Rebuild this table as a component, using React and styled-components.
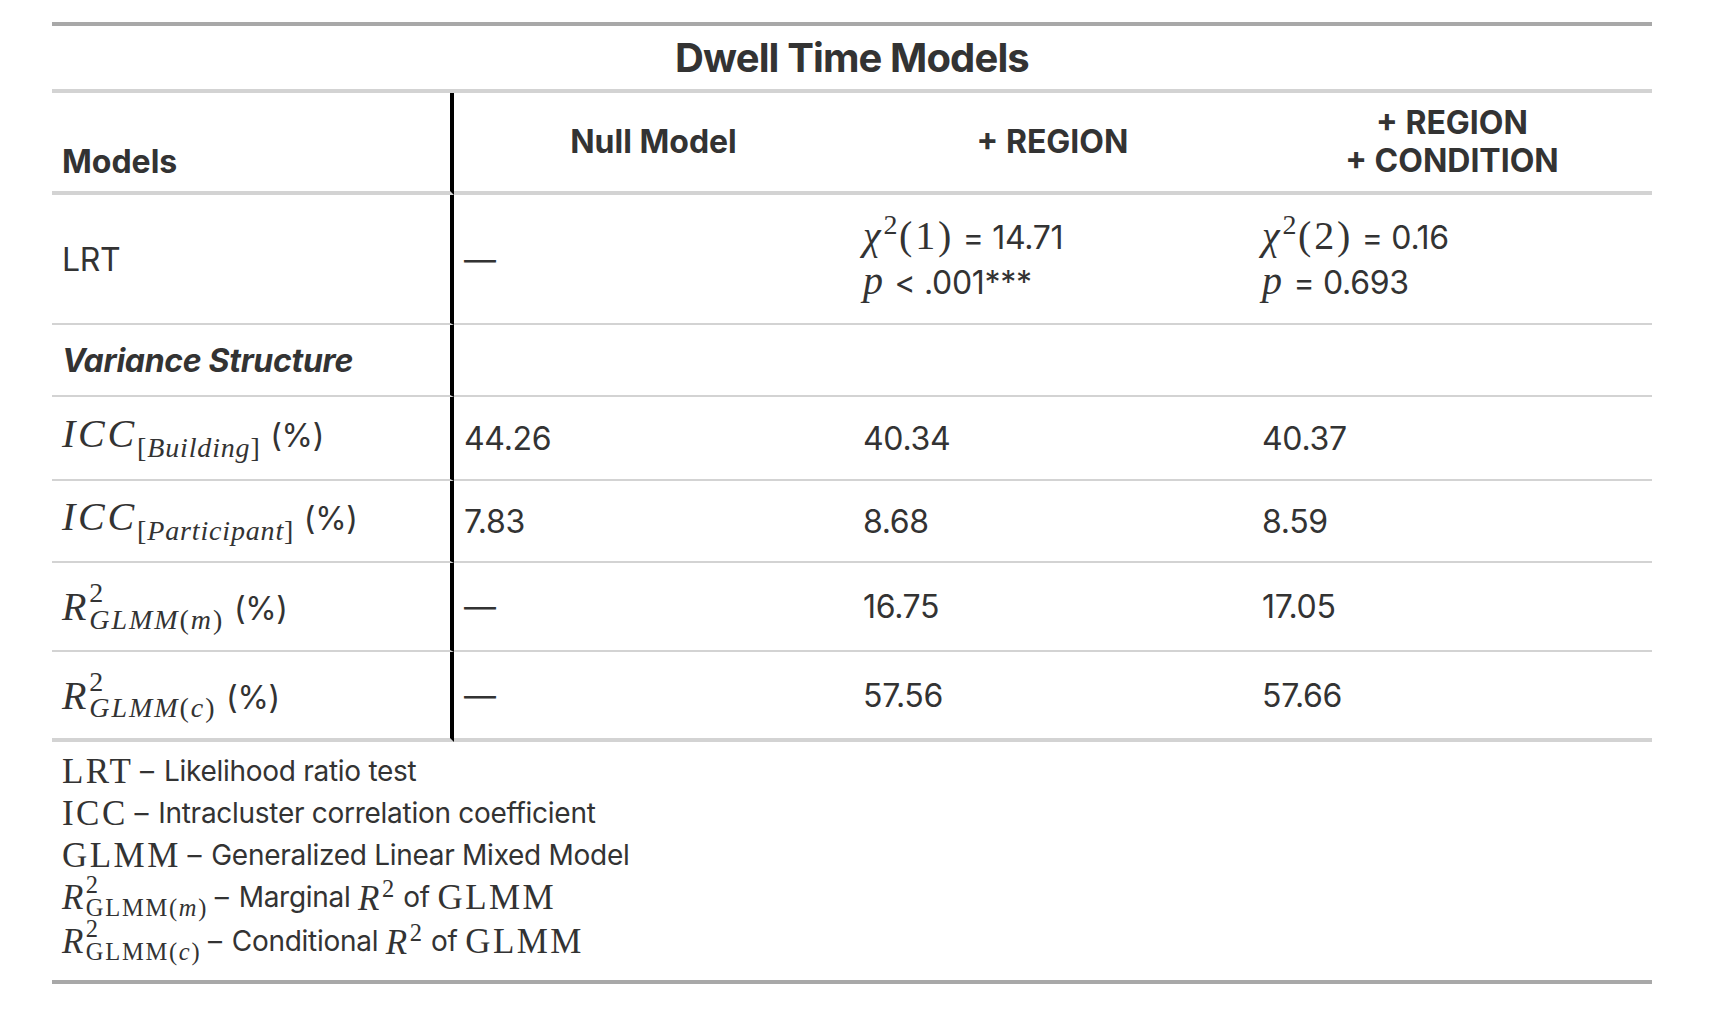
import React from 'react';
import styled, {createGlobalStyle} from 'styled-components';

const GlobalStyle = createGlobalStyle`
  html, body {
    margin: 0;
    background: #fff;
  }
  body {
    font-family: Inter, "Noto Sans", sans-serif;
    color: #333;
  }
`;

const Page = styled.div`
  padding: 22px 0 30px 52px;
`;

const Frame = styled.div`
  width: 1600px;
  border-top: 4px solid #a8a8a8;
  border-bottom: 4px solid #a8a8a8;
  font-size: 32px;
  color: #333;
`;

const Title = styled.div`
  box-sizing: border-box;
  height: 67px;
  display: flex;
  align-items: center;
  justify-content: center;
  font-size: 40px;
  font-weight: 700;
  letter-spacing: -0.022em;
  border-bottom: 4px solid #d3d3d3;
`;

const Row = styled.div`
  display: grid;
  grid-template-columns: 402px 399px 399px 400px;
  height: ${p => p.$h}px;
`;

const Cell = styled.div`
  box-sizing: border-box;
  display: flex;
  flex-direction: column;
  justify-content: ${p => (p.$bottom ? 'flex-end' : 'center')};
  align-items: ${p => (p.$center ? 'center' : 'flex-start')};
  text-align: ${p => (p.$center ? 'center' : 'left')};
  padding: 0 10px ${p => (p.$bottom ? 10 : 0)}px;
  border-bottom: ${p => p.$bw}px solid #d3d3d3;
  border-right: ${p => (p.$divider ? '4px solid #000' : 'none')};
  white-space: nowrap;
  letter-spacing: -0.01em;
`;

const HeadText = styled.div`
  font-weight: 700;
  line-height: 38px;
  letter-spacing: 0;
`;

const GroupLabel = styled.div`
  font-weight: 700;
  font-style: italic;
`;

const Line = styled.div`
  line-height: 48px;
  height: 48px;
`;

const M = styled.span`
  font-family: "Liberation Serif", "Times New Roman", serif;
  font-size: 1.25em;
  line-height: 1;
  letter-spacing: 0.07em;
`;

const I = styled.span`
  font-style: italic;
`;

const Rm = styled.span`
  font-style: normal;
`;

const Sub = styled.span`
  font-size: 0.7em;
  letter-spacing: 0.03em;
  vertical-align: -0.34em;
`;

const Sup = styled.span`
  font-size: 0.7em;
  letter-spacing: 0;
  vertical-align: 0.55em;
  margin-right: 0.06em;
`;

const Scripts = styled.span`
  display: inline-flex;
  flex-direction: column;
  vertical-align: 0.45em;

  & > span {
    font-size: 0.7em;
    line-height: 0.93;
    letter-spacing: 0.07em;
  }
`;

const Pct = styled.span`
  margin-left: 0.3em;
`;

const Notes = styled.div`
  box-sizing: border-box;
  height: 238px;
  padding: 8px 10px 0;
  font-size: 28px;
  letter-spacing: -0.01em;
`;

const Note = styled.div`
  height: ${p => p.$h || 42}px;
  display: flex;
  align-items: center;
  white-space: nowrap;
`;

const Dash = styled.span`
  margin: 0 0.36em 0 0.24em;
`;

const RSq = ({sub}) => (
  <>
    <I>R</I>
    <Scripts>
      <span>
        <Rm>2</Rm>
      </span>
      <span>{sub}</span>
    </Scripts>
  </>
);

const rows = [
  {
    h: 130,
    bw: 2,
    label: 'LRT',
    values: [
      '—',
      <>
        <Line>
          <M>
            <I>χ</I>
            <Sup>2</Sup>
            <Rm>(1)</Rm>
          </M>{' '}
          = 14.71
        </Line>
        <Line>
          <M>
            <I>p</I>
          </M>{' '}
          &lt; .001***
        </Line>
      </>,
      <>
        <Line>
          <M>
            <I>χ</I>
            <Sup>2</Sup>
            <Rm>(2)</Rm>
          </M>{' '}
          = 0.16
        </Line>
        <Line>
          <M>
            <I>p</I>
          </M>{' '}
          = 0.693
        </Line>
      </>,
    ],
  },
  {
    h: 72,
    bw: 2,
    label: <GroupLabel>Variance Structure</GroupLabel>,
    values: ['', '', ''],
  },
  {
    h: 84,
    bw: 2,
    label: (
      <span>
        <M>
          <I>ICC</I>
          <Sub>
            <Rm>[</Rm>
            <I>Building</I>
            <Rm>]</Rm>
          </Sub>
        </M>
        <Pct>(%)</Pct>
      </span>
    ),
    values: ['44.26', '40.34', '40.37'],
  },
  {
    h: 82,
    bw: 2,
    label: (
      <span>
        <M>
          <I>ICC</I>
          <Sub>
            <Rm>[</Rm>
            <I>Participant</I>
            <Rm>]</Rm>
          </Sub>
        </M>
        <Pct>(%)</Pct>
      </span>
    ),
    values: ['7.83', '8.68', '8.59'],
  },
  {
    h: 89,
    bw: 2,
    label: (
      <span>
        <M>
          <RSq
            sub={
              <>
                <I>GLMM</I>
                <Rm>(</Rm>
                <I>m</I>
                <Rm>)</Rm>
              </>
            }
          />
        </M>
        <Pct>(%)</Pct>
      </span>
    ),
    values: ['—', '16.75', '17.05'],
  },
  {
    h: 90,
    bw: 4,
    label: (
      <span>
        <M>
          <RSq
            sub={
              <>
                <I>GLMM</I>
                <Rm>(</Rm>
                <I>c</I>
                <Rm>)</Rm>
              </>
            }
          />
        </M>
        <Pct>(%)</Pct>
      </span>
    ),
    values: ['—', '57.56', '57.66'],
  },
];

const App = () => {
  return (
    <Page>
      <GlobalStyle />
      <Frame>
        <Title>Dwell Time Models</Title>
        <Row $h={102}>
          <Cell $bw={4} $divider $bottom>
            <HeadText>Models</HeadText>
          </Cell>
          <Cell $bw={4} $center>
            <HeadText>Null Model</HeadText>
          </Cell>
          <Cell $bw={4} $center>
            <HeadText>+ REGION</HeadText>
          </Cell>
          <Cell $bw={4} $center>
            <HeadText>+ REGION</HeadText>
            <HeadText>+ CONDITION</HeadText>
          </Cell>
        </Row>
        {rows.map((row, i) => (
          <Row key={i} $h={row.h}>
            <Cell $bw={row.bw} $divider>
              {row.label}
            </Cell>
            {row.values.map((v, j) => (
              <Cell key={j} $bw={row.bw}>
                {v}
              </Cell>
            ))}
          </Row>
        ))}
        <Notes>
          <Note>
            <M>
              <Rm>LRT</Rm>
            </M>
            <Dash>–</Dash>Likelihood ratio test
          </Note>
          <Note>
            <M>
              <Rm>ICC</Rm>
            </M>
            <Dash>–</Dash>Intracluster correlation coefficient
          </Note>
          <Note>
            <M>
              <Rm>GLMM</Rm>
            </M>
            <Dash>–</Dash>Generalized Linear Mixed Model
          </Note>
          <Note>
            <M>
              <RSq
                sub={
                  <>
                    <Rm>GLMM(</Rm>
                    <I>m</I>
                    <Rm>)</Rm>
                  </>
                }
              />
            </M>
            <Dash>–</Dash>Marginal&nbsp;
            <M>
              <I>R</I>
              <Sup>2</Sup>
            </M>
            &nbsp;of&nbsp;
            <M>
              <Rm>GLMM</Rm>
            </M>
          </Note>
          <Note $h={46}>
            <M>
              <RSq
                sub={
                  <>
                    <Rm>GLMM(</Rm>
                    <I>c</I>
                    <Rm>)</Rm>
                  </>
                }
              />
            </M>
            <Dash>–</Dash>Conditional&nbsp;
            <M>
              <I>R</I>
              <Sup>2</Sup>
            </M>
            &nbsp;of&nbsp;
            <M>
              <Rm>GLMM</Rm>
            </M>
          </Note>
        </Notes>
      </Frame>
    </Page>
  );
};

export default App;
